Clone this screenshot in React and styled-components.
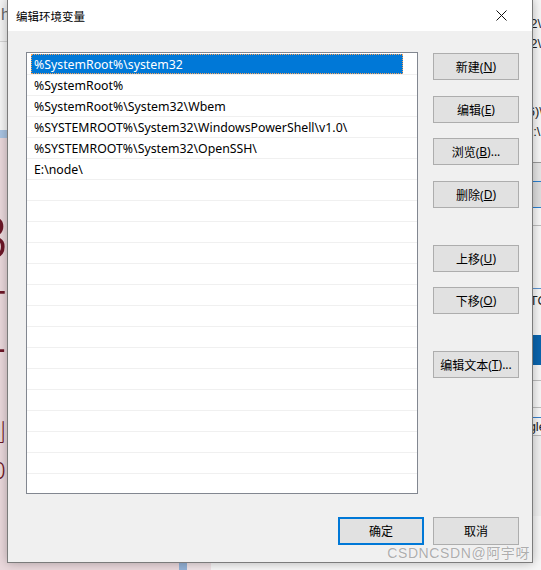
import React from 'react'
import styled, { createGlobalStyle } from 'styled-components';

const GlobalStyle = createGlobalStyle`
  html, body {
    margin: 0;
    padding: 0;
    background: #f0f0f0;
  }
  body {
    font-family: "Noto Sans", "Noto Sans CJK SC", sans-serif;
  }
`;

const Desktop = styled.div`
  position: relative;
  width: 541px;
  height: 570px;
  overflow: hidden;
  display: flex;
`;

/* page behind the dialog */
const DocPane = styled.div`
  width: 211px;
  display: flex;
  flex-direction: column;
`;

const DocHeader = styled.div`
  height: 42px;
  box-sizing: border-box;
  padding: 6px 0 0 1px;
  background: #f4f4f4;
  border-bottom: 1px solid #d4d4d4;
  color: #666;
  font: 16px "Liberation Sans", sans-serif;
`;

const DocGap = styled.div`
  height: 88px;
  background: #f6f6f6;
`;

const BlueBand = styled.div`
  height: 8px;
  background: #a9c4e3;
`;

const PinkArea = styled.div`
  flex: 1;
  display: flex;
`;

const PinkText = styled.div`
  width: 179px;
  background: #ead8dc;
  color: #6c1627;
  display: flex;
  flex-direction: column;
  padding-top: 66px;
  font-family: "Noto Sans", "Noto Sans CJK SC", sans-serif;
`;

const BigGlyph = styled.div`
  margin-left: ${(p) => p.shift}px;
  font-size: ${(p) => p.size}px;
  line-height: ${(p) => p.lh}px;
  font-weight: 300;
  white-space: nowrap;
`;

const BlueCol = styled.div`
  width: 8px;
  background: #93b1d6;
`;

const PinkRest = styled.div`
  flex: 1;
  background: #f0e3e6;
`;

const SidePane = styled.div`
  flex: 1;
  display: flex;
  flex-direction: column;
  background: #f7f7f7;
  font: 13px "Liberation Sans", sans-serif;
  color: #222;
`;

const SideLine = styled.div`
  height: ${(p) => p.h}px;
  box-sizing: border-box;
  text-align: right;
  white-space: nowrap;
  overflow: hidden;
  line-height: ${(p) => p.h}px;
  margin-right: ${(p) => p.shift || 0}px;
  background: ${(p) => p.bg || 'transparent'};
  border-bottom: ${(p) => (p.line ? `1px solid ${p.line}` : 'none')};
`;

/* dialog */
const Dialog = styled.div`
  position: absolute;
  left: 7px;
  top: -1px;
  width: 526px;
  height: 564px;
  box-sizing: border-box;
  border: 1px solid #7b7b7b;
  background: #f0f0f0;
  box-shadow: 0 0 10px rgba(0, 0, 0, 0.28);
  display: flex;
  flex-direction: column;
`;

const TitleBar = styled.div`
  height: 31px;
  flex-shrink: 0;
  background: #fff;
  display: flex;
  align-items: center;
  justify-content: space-between;
  padding: 0 25px 0 8px;
`;

const Title = styled.span`
  font: 11.5px "Noto Sans CJK SC", sans-serif;
  color: #000;
`;

const Body = styled.div`
  flex: 1;
  display: flex;
  flex-direction: column;
  padding: 21px 13px 17px 18px;
`;

const Main = styled.div`
  display: grid;
  grid-template-columns: 392px 86px;
  column-gap: 15px;
  height: 442px;
`;

const List = styled.div`
  box-sizing: border-box;
  border: 1px solid #828790;
  background: #fff;
  padding-top: 1px;
  overflow: hidden;
`;

const Row = styled.div`
  height: 21px;
  box-sizing: border-box;
  border-bottom: 1px solid #f0f0f0;
  padding-left: 4px;
  display: flex;
`;

const RowLabel = styled.div`
  width: 372px;
  height: 20px;
  box-sizing: border-box;
  padding-left: 2px;
  font: 12.3px "Noto Sans", sans-serif;
  white-space: nowrap;
  color: ${(p) => (p.selected ? '#fff' : '#000')};
  background: ${(p) => (p.selected ? '#0078d7' : 'transparent')};
  border: 1px dotted ${(p) => (p.selected ? '#f6a25a' : 'transparent')};
  display: flex;
  align-items: center;
`;

const ButtonColumn = styled.div`
  display: flex;
  flex-direction: column;
  padding-top: 1px;
`;

const Button = styled.button`
  width: 86px;
  height: ${(p) => p.h || 27}px;
  margin-top: ${(p) => p.gap || 0}px;
  box-sizing: border-box;
  border: ${(p) => (p.primary ? '2px solid #0078d7' : '1px solid #adadad')};
  background: #e1e1e1;
  padding: 0;
  font: 12px "Noto Sans", "Noto Sans CJK SC", sans-serif;
  color: #000;
  display: flex;
  align-items: center;
  justify-content: center;
  white-space: nowrap;

  u {
    text-underline-offset: 1px;
  }
`;

const Footer = styled.div`
  margin-top: 23px;
  display: flex;
  justify-content: flex-end;
  gap: 9px;
`;

const Watermark = styled.div`
  position: absolute;
  right: 11px;
  bottom: 8px;
  font: 14px "Liberation Sans", "Noto Sans CJK SC", sans-serif;
  color: rgba(105, 105, 105, 0.55);
  letter-spacing: 0.6px;
  white-space: nowrap;
  text-shadow: 0 0 1px #fff;
`;

const CloseIcon = () => (
  <svg width="11" height="11" viewBox="0 0 11 11">
    <path d="M0.5 0.5 L10.5 10.5 M10.5 0.5 L0.5 10.5" stroke="#111" strokeWidth="1" />
  </svg>
);

const paths = [
  '%SystemRoot%\\system32',
  '%SystemRoot%',
  '%SystemRoot%\\System32\\Wbem',
  '%SYSTEMROOT%\\System32\\WindowsPowerShell\\v1.0\\',
  '%SYSTEMROOT%\\System32\\OpenSSH\\',
  'E:\\node\\',
];

const buttons = [
  { text: '新建', key: 'N', gap: 0 },
  { text: '编辑', key: 'E', gap: 16 },
  { text: '浏览', key: 'B', gap: 15, more: true },
  { text: '删除', key: 'D', gap: 16 },
  { text: '上移', key: 'U', gap: 37 },
  { text: '下移', key: 'O', gap: 15 },
  { text: '编辑文本', key: 'T', gap: 37, more: true },
];

function App() {
  const rows = Array.from({ length: 22 }, (_, i) => paths[i] || '');

  return (
    <Desktop>
      <GlobalStyle />
      <DocPane>
        <DocHeader>h</DocHeader>
        <DocGap />
        <BlueBand />
        <PinkArea>
          <PinkText>
            <BigGlyph size={60} lh={64} shift={-30}>B</BigGlyph>
            <BigGlyph size={60} lh={64} shift={-52}>舌</BigGlyph>
            <BigGlyph size={60} lh={80} shift={-52}>万</BigGlyph>
            <BigGlyph size={24} lh={40} shift={-18}>剧</BigGlyph>
            <BigGlyph size={24} lh={36} shift={-8}>0</BigGlyph>
          </PinkText>
          <BlueCol />
          <PinkRest />
        </PinkArea>
      </DocPane>
      <SidePane>
        <SideLine h={14} />
        <SideLine h={20}>%SystemRoot%\system32\</SideLine>
        <SideLine h={20}>%SystemRoot%\system32\</SideLine>
        <SideLine h={48} />
        <SideLine h={20} shift={-2}>C:\Program Files (x86)\</SideLine>
        <SideLine h={20} shift={-3}>E:\;</SideLine>
        <SideLine h={21} line="#9a9a9a" />
        <SideLine h={19} bg="#e6e6e6" line="#2a7fd0" />
        <SideLine h={26} bg="#dedede" line="#2a7fd0" />
        <SideLine h={18} line="#bdbdbd" />
        <SideLine h={63} line="#5b93d0" />
        <SideLine h={24} shift={-6}>TC</SideLine>
        <SideLine h={22} />
        <SideLine h={30} bg="#0a64ad" />
        <SideLine h={16} line="#bdbdbd" />
        <SideLine h={27} line="#bdbdbd" />
        <SideLine h={10} line="#3a80cc" />
        <SideLine h={18} line="#bdbdbd" shift={-5}>gle</SideLine>
        <SideLine h={80} bg="#f0f0f0" />
      </SidePane>

      <Dialog>
        <TitleBar>
          <Title>编辑环境变量</Title>
          <CloseIcon />
        </TitleBar>
        <Body>
          <Main>
            <List>
              {rows.map((p, i) => (
                <Row key={i}>
                  <RowLabel selected={i === 0}>{p}</RowLabel>
                </Row>
              ))}
            </List>
            <ButtonColumn>
              {buttons.map((b) => (
                <Button key={b.key} gap={b.gap}>
                  {b.text}(<u>{b.key}</u>){b.more ? '...' : ''}
                </Button>
              ))}
            </ButtonColumn>
          </Main>
          <Footer>
            <Button h={28} primary>确定</Button>
            <Button h={28}>取消</Button>
          </Footer>
        </Body>
      </Dialog>
      <Watermark>CSDNCSDN@阿宇呀</Watermark>
    </Desktop>
  )
}

export default App
